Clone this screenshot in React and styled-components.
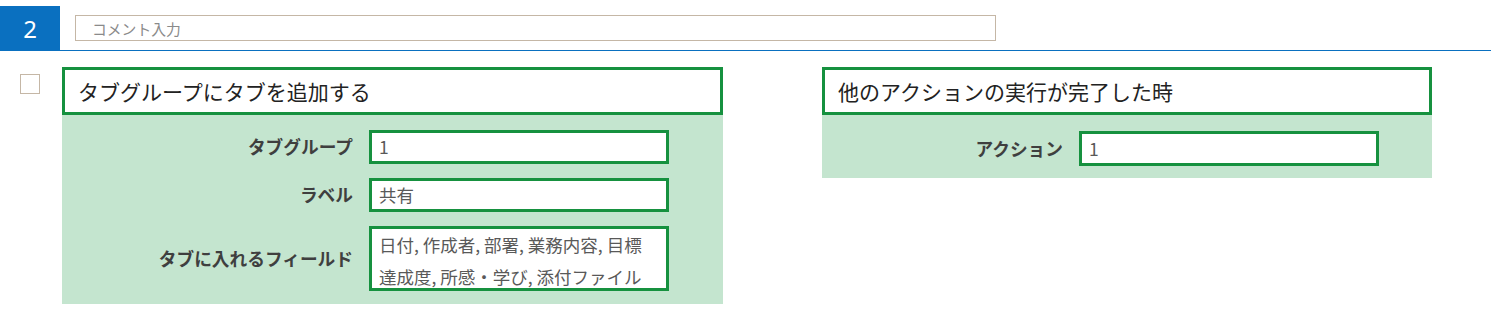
import React from 'react';
import styled, { createGlobalStyle } from 'styled-components';

const GlobalStyle = createGlobalStyle`
  html, body {
    margin: 0;
    padding: 0;
    background: #ffffff;
    font-family: "Noto Sans CJK JP", "Noto Sans", sans-serif;
  }
`;

const Page = styled.div`
  width: 1491px;
  height: 317px;
  overflow: hidden;
`;

const TopBar = styled.div`
  display: flex;
  align-items: flex-start;
  gap: 15px;
  padding-top: 6px;
  border-bottom: 1px solid #0a70c0;
  height: 44px;
`;

const StepNumber = styled.div`
  width: 60px;
  height: 44px;
  background-color: #0a70c0;
  color: #ffffff;
  font-family: "Noto Sans", "Open Sans", sans-serif;
  font-size: 24px;
  display: flex;
  align-items: center;
  justify-content: center;
`;

const CommentInput = styled.input`
  box-sizing: border-box;
  margin-top: 9px;
  width: 921px;
  height: 26px;
  border: 1px solid #c5b7a6;
  padding: 0 0 0 16px;
  font-family: "Noto Sans CJK JP", sans-serif;
  font-size: 14.8px;
  outline: none;

  &::placeholder {
    color: #8a8a8a;
  }
`;

const Content = styled.div`
  display: flex;
  align-items: flex-start;
  padding: 16px 0 0 20px;
`;

const Checkbox = styled.div`
  box-sizing: border-box;
  width: 20px;
  height: 20px;
  margin-top: 7px;
  border: 1px solid #c5b7a6;
  background: #ffffff;
  margin-right: 22px;
`;

const Card = styled.div`
  width: ${p => p.width}px;
  margin-right: ${p => p.gapRight || 0}px;
`;

const CardHeader = styled.div`
  box-sizing: border-box;
  height: 48px;
  border: 3px solid #16913f;
  background: #ffffff;
  color: #222222;
  font-size: 21px;
  display: flex;
  align-items: center;
  padding-left: 13px;
  line-height: 1;
`;

const CardBody = styled.div`
  background-color: #c4e5cf;
  padding: ${p => p.padTop}px 0 ${p => p.padBottom}px 0;
  display: flex;
  flex-direction: column;
  gap: 14px;
`;

const FieldRow = styled.div`
  display: grid;
  grid-template-columns: ${p => p.labelWidth}px 300px;
  column-gap: 16px;
  align-items: center;
`;

const Label = styled.div`
  text-align: right;
  font-weight: bold;
  font-size: 17.7px;
  color: #3f3f3f;
  line-height: 1;
`;

const FieldBox = styled.div`
  box-sizing: border-box;
  height: ${p => p.height}px;
  border: 3px solid #16913f;
  background: #ffffff;
  color: #595959;
  font-size: 17.5px;
  padding: 0 4px 0 7px;
  line-height: ${p => (p.multi ? '32px' : `${p.height - 6}px`)};
  white-space: pre-line;
  overflow: hidden;
`;

const fields = [
  { label: 'タブグループ', value: '1', height: 34 },
  { label: 'ラベル', value: '共有', height: 34 },
  {
    label: 'タブに入れるフィールド',
    value: '日付, 作成者, 部署, 業務内容, 目標\n達成度, 所感・学び, 添付ファイル',
    height: 65,
    multi: true,
  },
];

export default function App() {
  return (
    <Page>
      <GlobalStyle />
      <TopBar>
        <StepNumber>2</StepNumber>
        <CommentInput placeholder="コメント入力" />
      </TopBar>
      <Content>
        <Checkbox />
        <Card width={661} gapRight={99}>
          <CardHeader>タブグループにタブを追加する</CardHeader>
          <CardBody padTop={15} padBottom={13}>
            {fields.map(f => (
              <FieldRow key={f.label} labelWidth={291}>
                <Label>{f.label}</Label>
                <FieldBox height={f.height} multi={f.multi}>{f.value}</FieldBox>
              </FieldRow>
            ))}
          </CardBody>
        </Card>
        <Card width={610}>
          <CardHeader>他のアクションの実行が完了した時</CardHeader>
          <CardBody padTop={16} padBottom={12}>
            <FieldRow labelWidth={241}>
              <Label>アクション</Label>
              <FieldBox height={35}>1</FieldBox>
            </FieldRow>
          </CardBody>
        </Card>
      </Content>
    </Page>
  );
}
